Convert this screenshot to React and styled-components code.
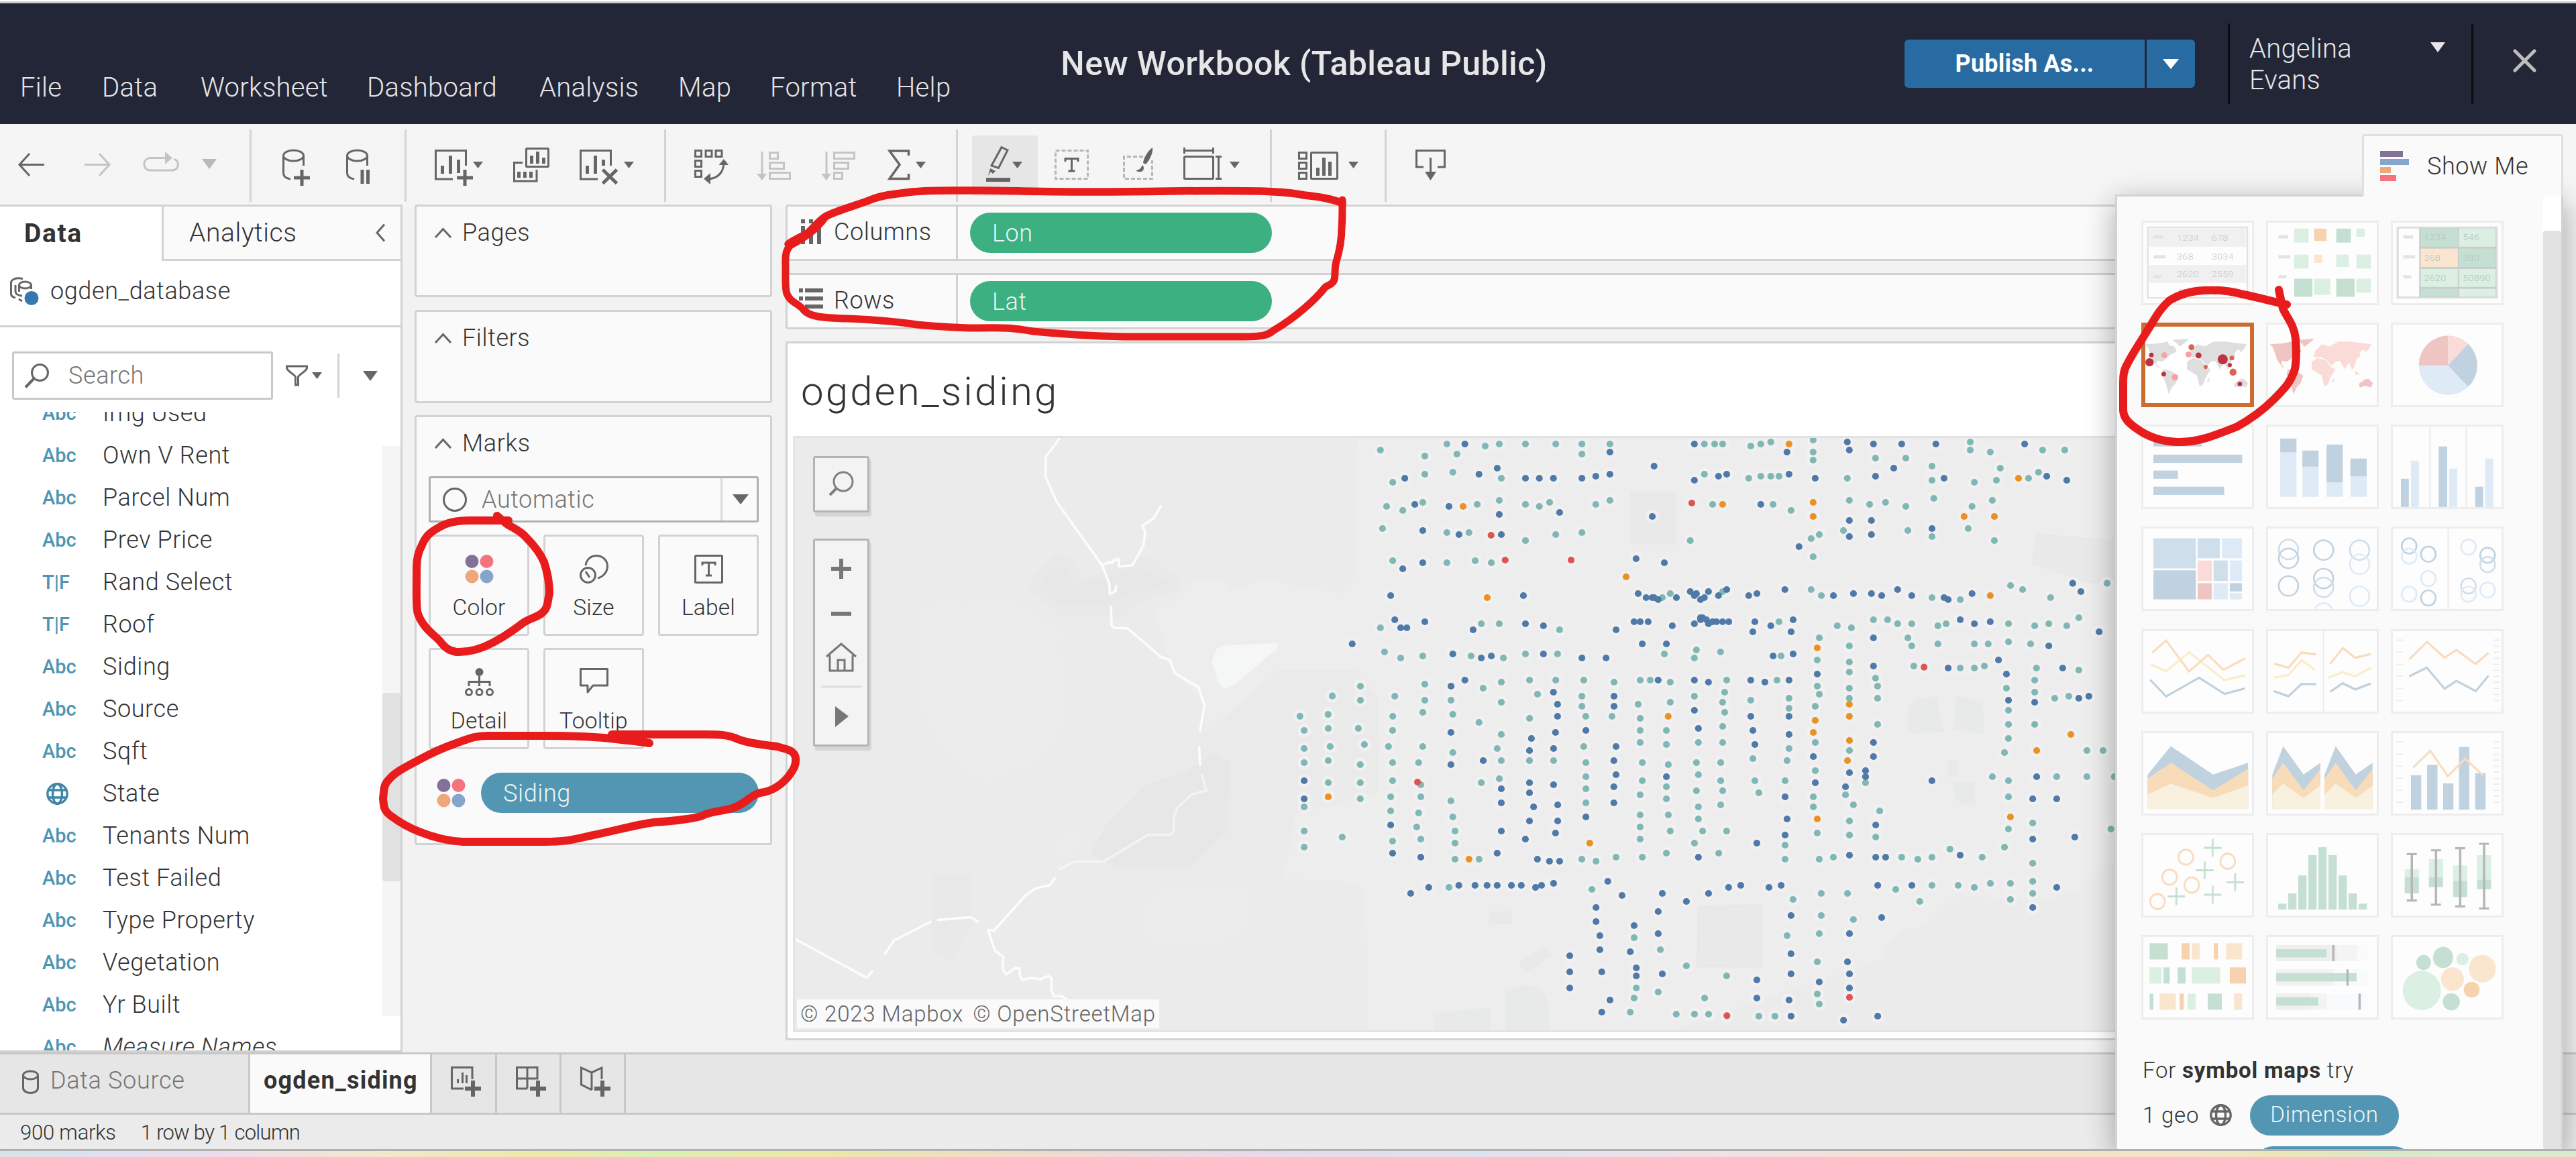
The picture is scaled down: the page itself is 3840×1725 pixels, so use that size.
import React from "react";
import styled, { createGlobalStyle, css } from "styled-components";

const GlobalStyle = createGlobalStyle`
  *, *::before, *::after { box-sizing: border-box; }
  body { margin: 0; background: #f2f2f2; }
  svg { display: block; flex: none; }
`;

const ink = "#666666";
const line = "#d2d2d2";
const faint = "#c4c4c4";

/* ---------- shell ---------- */
const Shell = styled.div`
  position: relative;
  display: flex;
  flex-direction: column;
  width: 3840px;
  height: 1725px;
  overflow: hidden;
  background: #f2f2f2;
  color: #333;
  font-family: Roboto, "Liberation Sans", sans-serif;
  font-size: 36px;
  font-weight: 350;
  letter-spacing: 0.6px;
  white-space: nowrap;
`;
const WindowEdge = styled.div`
  flex: none;
  height: 5px;
  border-top: 2px solid #fff;
  background: #cbcdce;
`;

/* ---------- header ---------- */
const Header = styled.header`
  display: flex;
  flex: none;
  height: 180px;
  background: #232637;
  color: #e6e6e6;
  font-size: 40px;
`;
const Menu = styled.nav`
  display: grid;
  grid-template-columns: 122px 147px 248px 257px 207px 137px 188px 147px;
  width: 1483px;
  padding: 101px 0 0 30px;
  line-height: 50px;
  letter-spacing: 0.3px;
`;
const DocTitle = styled.h1`
  width: 922px;
  margin: 60px 0 0;
  font-size: 50px;
  font-weight: 500;
  line-height: 60px;
  letter-spacing: 0.4px;
  text-align: center;
`;
const Publish = styled.div`
  display: flex;
  gap: 3px;
  width: 433px;
  height: 72px;
  margin: 54px 49px 0 auto;
`;
const PublishButton = styled.button`
  display: flex;
  align-items: center;
  justify-content: center;
  padding: 0;
  border: 0;
  background: #286ba2;
  color: #fff;
  font: 700 36px Roboto, sans-serif;
  letter-spacing: 0.2px;
  ${(p) => (p.$split ? css`width: 72px; border-radius: 0 6px 6px 0;` : css`flex: 1; border-radius: 6px 0 0 6px;`)}
`;
const HeaderRule = styled.div`
  width: 3px;
  height: 120px;
  margin-top: 30px;
  background: #0b0b10;
`;
const User = styled.div`
  display: flex;
  justify-content: space-between;
  width: 360px;
  padding: 44px 39px 0 29px;
  line-height: 47px;
  letter-spacing: 0.2px;
  svg { margin-top: 14px; }
`;
const Close = styled.div`
  width: 153px;
  padding: 68px 0 0 59px;
`;

/* ---------- toolbar ---------- */
const Toolbar = styled.div`
  display: flex;
  flex: none;
  align-items: center;
  height: 124px;
  margin-bottom: -4px;
  background: #f5f5f5;
`;
const Tool = styled.div`
  flex: none;
  width: ${(p) => p.$w}px;
  margin-left: ${(p) => p.$ml}px;
  ${(p) => p.$on && css`padding: 15px 0; background: #e6e6e6; border-radius: 3px;`}
`;
const ToolRule = styled.div`
  flex: none;
  width: 3px;
  height: 108px;
  margin-left: ${(p) => p.$ml}px;
  background: #d4d4d4;
`;

/* ---------- data pane ---------- */
const Main = styled.main`
  display: flex;
  flex: none;
  height: 1264px;
  padding-right: 40px;
`;
const DataPane = styled.aside`
  display: flex;
  flex-direction: column;
  flex: none;
  width: 600px;
  margin-right: 18px;
  border: 3px solid ${line};
  border-left: 0;
  background: #fff;
`;
const PaneTabs = styled.div`
  display: flex;
  flex: none;
  height: 81px;
  font-size: 39px;
  line-height: 81px;
`;
const PaneTab = styled.div`
  ${(p) => p.$active
    ? css`width: 241px; padding-left: 36px; font-weight: 700; letter-spacing: 1.6px;`
    : css`
      display: flex;
      flex: 1;
      align-items: center;
      justify-content: space-between;
      padding: 0 23px 0 38px;
      border: solid ${line};
      border-width: 0 0 3px 3px;
      background: #fafafa;
      line-height: 78px;
    `}
`;
const Source = styled.div`
  display: flex;
  flex: none;
  gap: 17px;
  align-items: center;
  height: 99px;
  padding: 0 0 6px 15px;
  border-bottom: 3px solid ${line};
  letter-spacing: 0.6px;
`;
const SearchRow = styled.div`
  display: flex;
  flex: none;
  align-items: center;
  height: 126px;
  padding: 0 0 0 18px;
`;
const SearchBox = styled.div`
  display: flex;
  gap: 29px;
  align-items: center;
  width: 389px;
  height: 72px;
  margin: 18px 19px 0 0;
  padding-left: 15px;
  border: 3px solid #c8c8c8;
  border-radius: 3px;
  color: #757575;
`;
const SearchTools = styled.div`
  display: flex;
  align-items: center;
  height: 66px;
  margin-top: 18px;
`;
const SearchRule = styled.div`
  width: 3px;
  height: 66px;
  margin: 0 35px 0 23px;
  background: #d4d4d4;
`;
const FieldArea = styled.div`
  display: flex;
  flex: 1;
  overflow: hidden;
`;
const FieldList = styled.ul`
  flex: 1;
  margin: -30px 0 0;
  padding: 0;
  list-style: none;
`;
const Field = styled.li`
  display: flex;
  align-items: center;
  height: 63.07px;
  padding-left: 63px;
  font-style: ${(p) => (p.$italic ? "italic" : "normal")};
`;
const FieldType = styled.span`
  display: flex;
  flex: none;
  width: 90px;
  color: #4f95b3;
  font-size: 29px;
  font-style: normal;
  font-weight: 500;
  letter-spacing: 0;
`;
const Scroll = styled.div`
  flex: none;
  width: 27px;
  height: ${(p) => p.$h};
  margin-top: ${(p) => p.$mt}px;
  padding-top: ${(p) => p.$start}px;
  background: ${(p) => p.$track};
`;
const Thumb = styled.div`
  height: ${(p) => p.$h};
  border-radius: 4px;
  background: #e1e1e1;
`;

/* ---------- cards ---------- */
const Cards = styled.section`
  display: flex;
  flex-direction: column;
  flex: none;
  gap: 18.5px;
  width: 533px;
  margin-right: 20px;
`;
const Card = styled.div`
  flex: none;
  height: ${(p) => p.$h}px;
  border: 3px solid ${line};
  border-radius: 4px;
  background: #fafafa;
`;
const CardHead = styled.div`
  display: flex;
  gap: 15px;
  align-items: center;
  height: 36px;
  margin: 21px 0 0 26px;
  line-height: 36px;
`;
const MarkType = styled.div`
  display: flex;
  align-items: center;
  height: 69px;
  margin: 31px 17px 18px 18px;
  padding-left: 18px;
  border: 3px solid #b0b0b0;
  border-radius: 3px;
  color: #757575;
  line-height: 69px;
  span { flex: 1; margin-left: 22px; padding-top: 2px; }
`;
const MarkTypeArrow = styled.div`
  display: flex;
  align-items: center;
  height: 63px;
  padding: 0 12px 0 15px;
  border-left: 3px solid #dcdcdc;
`;
const MarkGrid = styled.div`
  display: grid;
  grid-template: repeat(2, 151px) / repeat(3, 150px);
  gap: 18px 21px;
  margin-left: 18px;
`;
const MarkButton = styled.div`
  display: flex;
  flex-direction: column;
  align-items: center;
  padding-top: 27px;
  border: 3px solid ${line};
  border-radius: 4px;
  font-size: 33.5px;
  line-height: 40px;
  letter-spacing: 0.2px;
  svg { margin-bottom: 16px; }
`;
const MarkPill = styled.div`
  display: flex;
  gap: 23px;
  align-items: center;
  margin: 35px 17px 0 30px;
`;
const Pill = styled.div`
  width: ${(p) => p.$w}px;
  height: 60px;
  padding: 4px 0 0 33px;
  border-radius: 30px;
  background: ${(p) => p.$bg};
  color: #ecf6f3;
  line-height: 55px;
`;

/* ---------- shelves and view ---------- */
const Stage = styled.section`
  display: flex;
  flex: 1;
  flex-direction: column;
  gap: 18px;
`;
const Shelf = styled.div`
  display: flex;
  flex: none;
  align-items: center;
  height: 84px;
  border: 3px solid ${line};
  border-radius: 4px;
  background: #fafafa;
`;
const ShelfLabel = styled.div`
  display: flex;
  gap: 16px;
  align-items: center;
  width: 254px;
  height: 78px;
  margin-right: 18px;
  padding: 0 0 2px 17px;
  border-right: 3px solid ${line};
`;
const View = styled.div`
  height: 1042px;
  border: 3px solid ${line};
  background: #fff;
`;
const ViewTitle = styled.h2`
  height: 138px;
  margin: 0;
  padding: 7px 0 0 20px;
  font-size: 60px;
  font-weight: 300;
  line-height: 129px;
  letter-spacing: 3.1px;
`;
const MapFrame = styled.div`
  position: relative;
  height: 889px;
  margin: 0 8px;
  border: 3px solid #e3e3e3;
  background: #ebebeb;
  overflow: hidden;
`;
const MapControl = styled.div`
  position: absolute;
  top: ${(p) => p.$top}px;
  left: 27px;
  width: 84px;
  height: ${(p) => p.$h}px;
  border: 3px solid #b4b4b4;
  border-radius: 3px;
  background: #f3f3f3;
  box-shadow: 3px 6px 0 #d5d5d5;
`;
const Credit = styled.div`
  position: absolute;
  bottom: 3px;
  left: 3px;
  height: 43px;
  padding: 0 5px;
  background: #fafafa;
  color: ${ink};
  font-size: 33px;
  line-height: 44px;
  letter-spacing: 0.8px;
  span + span { margin-left: 14px; }
`;

/* ---------- footer ---------- */
const SheetTabs = styled.footer`
  display: flex;
  flex: none;
  height: 93px;
  border: solid #c8c8c8;
  border-width: 3px 0;
  background: #e6e6e6;
`;
const SheetTab = styled.div`
  display: flex;
  align-items: center;
  width: ${(p) => p.$w}px;
  padding: 0 0 9px ${(p) => p.$pad}px;
  border-right: 3px solid #c8c8c8;
  color: ${(p) => (p.$active ? "#333" : "#757575")};
  background: ${(p) => (p.$active ? "#fafafa" : "transparent")};
  font-weight: ${(p) => (p.$active ? 700 : "inherit")};
  letter-spacing: ${(p) => (p.$active ? 1.2 : 0.7)}px;
  svg { margin: 3px 17px 0 0; }
`;
const Status = styled.div`
  display: flex;
  flex: none;
  gap: 37px;
  height: 51px;
  padding-left: 30px;
  background: #ebebeb;
  font-size: 31px;
  line-height: 54px;
  letter-spacing: -0.2px;
  span:last-child { letter-spacing: -0.7px; }
`;
const Wallpaper = styled.div`
  position: relative;
  z-index: 3;
  flex: none;
  height: 12px;
  border-top: 3px solid #b2b0ae;
  background: linear-gradient(90deg, #dbe2e6 0, #dfe0ee 130px, #ecdcec 320px, #f3e6cf 560px, #f0e8a8 800px, #dcefb4 960px, #ece8a6 1200px, #f0dcc8 1500px, #ead8e8 1850px, #dfe2ee 2200px, #f3e0e4 2600px, #f5e0c8 3000px, #f5e4cc 3260px, #ebe6b6 3410px, #dbe8c8 3550px, #dde9cf 3840px);
`;

/* ---------- show me ---------- */
const ShowMe = styled.div`
  position: absolute;
  z-index: 2;
  top: 200px;
  left: 3153px;
  display: flex;
  flex-direction: column;
  align-items: flex-end;
  width: 668px;
  height: 1513px;
`;
const ShowMeTab = styled.div`
  z-index: 1;
  display: flex;
  flex: none;
  gap: 27px;
  align-items: center;
  width: 300px;
  height: 93px;
  margin-bottom: -3px;
  padding: 0 0 0 24px;
  border: 3px solid #dfdfdf;
  border-bottom: 0;
  border-radius: 4px 4px 0 0;
  background: #fafafa;
`;
const Panel = styled.div`
  display: flex;
  flex: none;
  width: 668px;
  height: 1423px;
  border: 3px solid ${line};
  border-bottom: 0;
  background: #fafafa;
  box-shadow: 0 12px 42px rgba(0, 0, 0, 0.32);
  overflow: hidden;
`;
const PanelBody = styled.div`
  flex: 1;
  padding: 36px 0 0 36px;
`;
const Gallery = styled.div`
  display: grid;
  grid-template-columns: repeat(3, 168px);
  grid-auto-rows: 126px;
  gap: 26.15px 18px;
`;
const Tile = styled.div`
  border: ${(p) => (p.$picked ? "6px solid #cc6c2f" : "3px solid #ededed")};
  background: ${(p) => (p.$picked ? "#fff" : "#fdfdfd")};
  svg { width: 100%; height: 100%; }
`;
const Hint = styled.div`
  display: flex;
  align-items: center;
  margin: ${(p) => p.$mt}px 0 0 2px;
  padding-left: ${(p) => p.$pl || 0}px;
  font-size: 33px;
  line-height: 50px;
  letter-spacing: 0.8px;
  white-space: pre;
`;
const HintPill = styled.div`
  width: ${(p) => p.$w}px;
  height: 60px;
  border-radius: 30px;
  background: #5296b4;
  color: #f0f6f8;
  line-height: 58px;
  text-align: center;
`;

const Annotations = styled.svg`
  position: absolute;
  z-index: 4;
  top: 0;
  left: 0;
  pointer-events: none;
`;

/* ---------- icons ---------- */
const Ico = ({ w, h = 60, c = ink, sw = 3, children }) => (
  <svg width={w} height={h} viewBox={`0 0 ${w} ${h}`} fill="none" stroke={c} strokeWidth={sw}>{children}</svg>
);
const Fill = ({ d, c = ink }) => <path d={d} fill={c} stroke="none" />;
const Drop = ({ w = 22, h = 15, c = ink }) => (
  <svg width={w} height={h} viewBox="0 0 22 15" preserveAspectRatio="none"><path d="M0 0H22L11 15Z" fill={c} /></svg>
);
const Caret = ({ x }) => <Fill d={`M${x} 24h15l-7.5 10z`} />;
const Plus = ({ x, y, r = 12, w = 6 }) => <path d={`M${x - r} ${y}h${2 * r}M${x} ${y - r}v${2 * r}`} strokeWidth={w} />;
const Cylinder = () => (
  <g>
    <ellipse cx="16.5" cy="15" rx="15" ry="8" />
    <path d="M1.5 15V41C1.5 46 6 49 12 50M31.5 15V30" />
  </g>
);
const FourDots = () => (
  <svg width="43" height="43" viewBox="0 0 43 43">
    <circle cx="10.5" cy="10" r="10" fill="#84719a" /><circle cx="32.5" cy="10" r="10" fill="#f3747f" />
    <circle cx="10.5" cy="32.5" r="10" fill="#eea67a" /><circle cx="32.5" cy="32.5" r="10" fill="#86a5cb" />
  </svg>
);
const Globe = ({ c, s = 33, sw = 3.4 }) => (
  <svg width={s} height={s} viewBox="0 0 33 33" fill="none" stroke={c} strokeWidth={sw}>
    <circle cx="16.5" cy="16.5" r="14.7" /><ellipse cx="16.5" cy="16.5" rx="7" ry="14.7" />
    <path d="M3.5 11H29.5M3.5 22H29.5" />
  </svg>
);
const Chevron = () => <Ico w={27} h={16}><path d="M2 15L13.5 2.5L25 15" /></Ico>;

const tools = [
  [27, 40, <path d="M39 28.5H2M17 12L2 28.5L17 45" />],
  [59, 40, <path d="M0 28.5H37M22 12L37 28.5L22 45" stroke={faint} />],
  [47, 55, <g stroke={faint}><path d="M46 20.5C50 21 52.5 24 52.5 28C52.5 34 48 37 43 37H12C6 37 2 34 2 28C2 22 6 18.500 12 18.500H34" /><Fill c={faint} d="M33 9L44 18.500L33 28Z" /></g>],
  [33, 22, <Fill c="#b9b9b9" d="M0 20H22L11 35Z" />],
  [49],
  [46, 41, <g><Cylinder /><Plus x={29} y={48} w={5} /></g>],
  [54, 38, <g><Cylinder /><Fill d="M21.500 36h5v21h-5zM30 36h5v21h-5z" /></g>],
  [49],
  [42, 72, <g><path d="M27 50H1.500V7.500H46.500V30" /><Fill d="M9 30h5v12H9zM21 15h5v27h-5zM33 21h5v20h-5z" /><Plus x={45} y={48} w={5} /><Caret x={57} /></g>],
  [45, 54, <g><rect x="19.500" y="4.500" width="33" height="27" rx="1" /><Fill d="M25 15h5v12h-5zM34 9h5v18h-5zM43 18h5v9h-5z" /><path d="M14 25.500H1.500V53H35V36" /><Fill d="M6 39h5v9H6zM15 39h5v9h-5zM24 39h5v9h-5z" /></g>],
  [45, 81, <g><path d="M27 50H1.500V7.500H46.500V30" /><Fill d="M9 30h5v12H9zM21 15h5v27h-5zM33 21h5v9h-5z" /><path d="M34.500 36L55.500 56.500M55.500 36L34.500 56.500" strokeWidth="5" /><Caret x={66} /></g>],
  [45],
  [42, 54, <g><rect x="1.500" y="7.500" width="9" height="9" /><rect x="17" y="7.500" width="9" height="9" /><rect x="32" y="7.500" width="9" height="9" /><rect x="1.500" y="22.500" width="9" height="9" /><rect x="1.500" y="37.500" width="9" height="9" /><path d="M44 27C43 40 36 48 22 50" /><Fill d="M36.500 29L44 20L51 29ZM14 49.500L24 41V58Z" /></g>],
  [39, 51, <g stroke={faint}><path d="M8 9V43" /><Fill c={faint} d="M0 42H15L8 52Z" /><rect x="19.500" y="10.500" width="12" height="9" /><rect x="19.500" y="25.500" width="21" height="9" /><rect x="19.500" y="40.500" width="30" height="9" /></g>],
  [45, 51, <g stroke={faint}><path d="M8 9V43" /><Fill c={faint} d="M0 42H15L8 52Z" /><rect x="19.500" y="10.500" width="30" height="9" /><rect x="19.500" y="25.500" width="21" height="9" /><rect x="19.500" y="40.500" width="12" height="9" /></g>],
  [48, 57, <g><path d="M31.500 15V8H3L18 28.500L3 49.500H31.500V42" strokeWidth="3.500" /><Caret x={42} /></g>],
  [45],
  [21, 98, <g><path d="M44 2.500L53 7L39.500 33.500L29 30Z" /><Fill d="M27 34L35 38L31 42L28 39L24 45Z" /><Fill d="M21 48h36v6H21z" /><Caret x={60} /></g>, true],
  [25, 51, <g><rect x="1.500" y="7.500" width="48" height="42" stroke="#b6b6b6" strokeDasharray="6 3" /><path d="M16 24V19.500H35V24M25.500 20V38M20.500 38H30.500" /></g>],
  [51, 48, <g><path d="M30 16.500H1.500V49.500H43.500V22" stroke="#b6b6b6" strokeDasharray="6 3" /><Fill d="M44 3C37 8 31 18 30 26L34 28C41 20 45 10 44 3ZM29 29C27 33 26 36 19 37C25 42 34 38 30 30Z" /></g>],
  [42, 86, <g><rect x="1.500" y="16.500" width="43" height="33" rx="1" /><path d="M1.500 3V12M44.500 3V12M1.500 7.500H44.500M48 16.500H57M48 49.500H57M52.500 16.500V49.500" /><Caret x={69} /></g>],
  [43],
  [39, 90, <g><rect x="1.500" y="10.500" width="11" height="9" /><rect x="1.500" y="25.500" width="11" height="9" /><rect x="1.500" y="40.500" width="11" height="9" /><rect x="19.500" y="10.500" width="39" height="39" rx="1" /><Fill d="M27 33h5v12h-5zM36 18h5v27h-5zM45 24h5v21h-5z" /><Caret x={75} /></g>],
  [39],
  [43, 45, <g><path d="M12 32H1.500V7.500H43.500V32H33M22.500 18V40" /><Fill d="M14 39H31L22.500 52Z" /></g>],
];

const fields = [
  ["Abc", "Img Used"], ["Abc", "Own V Rent"], ["Abc", "Parcel Num"], ["Abc", "Prev Price"], ["T|F", "Rand Select"],
  ["T|F", "Roof"], ["Abc", "Siding"], ["Abc", "Source"], ["Abc", "Sqft"], ["geo", "State"], ["Abc", "Tenants Num"],
  ["Abc", "Test Failed"], ["Abc", "Type Property"], ["Abc", "Vegetation"], ["Abc", "Yr Built"], ["Abc", "Measure Names"],
];

/* ---------- map data ---------- */
const palette = { t: "#80b7b4", b: "#4f79a8", o: "#ed9022", r: "#dd5553" };

/* Each sector has its own origin and units per pixel; marks are "x,y" pairs. */
const sectors = [
  {
    x: 1160, y: 480, sx: 1.742, sy: 1.4255,
    t: "1439,795 1355,838 1428,834",
  },
  {
    x: 2000, y: 640, sx: 2.6133, sy: 3,
    t: "151,93 410,66 559,75 614,66 716,66 834,66 936,66 1045,66 1413,66 1453,66 1484,66 324,120 449,111 936,111 324,201 433,192 199,237 622,219 1413,201 175,345 238,363 316,327 528,336 614,318 716,336 770,345 810,327 990,336 1045,318 1445,336 159,444 410,462 496,462 716,498 834,471 936,462 1358,498 199,588 410,597 520,588 583,597 1249,753 1280,735 1484,726 151,888 544,870 614,870 849,897 167,996 230,1023 316,1014 504,1014 630,1023 716,1005 841,1005 1257,1005 1382,987 1374,1023 1476,996 73,1149 73,1212 324,1140 207,1194 324,1212 426,1212 316,1266 199,1284 433,1275 551,1158 622,1131 622,1221 535,1311 732,1122 834,1122 763,1185 732,1293 943,1122 936,1194 936,1239 951,1284 1061,1131 1053,1284 1163,1122 1202,1122 1280,1131 1155,1230 1280,1221 1163,1293 1374,1194 1500,1122 1492,1176 1484,1221 1492,1266",
    b: "480,66 1374,66 1045,102 1217,165 606,174 246,219 535,201 716,219 770,219 825,219 936,219 990,210 1045,201 1374,228 1468,210 1500,201 285,336 418,345 614,381 849,372 1210,390 316,453 457,471 622,471 316,597 238,624 1147,579 1257,597 191,744 708,744 1155,735 1186,753 1210,753 1217,753 1233,762 1304,753 1358,726 1374,744 1382,735 1398,762 1413,753 1429,726 1468,744 1500,717 207,852 230,888 254,888 324,861 512,897 716,870 786,879 1069,897 1139,861 1163,861 1194,861 1288,879 1374,870 1398,843 1398,852 1406,843 1421,852 1429,870 1445,861 1460,861 1484,861 1508,861 41,960 1171,960 1265,960 433,1005 544,1023 583,1014 786,1005 936,1023 1030,1023 480,1122 426,1149 825,1176 841,1230 841,1284 1061,1194 1061,1239 1233,1122 1374,1122 1429,1131 1374,1257",
    o: "473,345 1484,336 1108,660 567,753 1272,1284",
    r: "1364,330 582,474 637,585 894,585",
  },
  {
    x: 2580, y: 640, sx: 2.6133, sy: 3,
    t: "78,75 117,66 156,57 321,48 321,102 321,138 564,129 682,129 933,57 933,93 1011,102 1215,93 1301,93 784,165 1050,174 70,219 117,210 156,210 188,210 454,219 784,228 949,237 1035,228 1160,219 1199,192 165,336 235,363 462,318 541,336 603,327 682,345 791,309 940,345 1019,318 345,471 313,489 439,453 690,453 784,480 925,444 1027,498 321,570 313,717 353,744 784,753 894,762 1090,699 1137,717 1246,753 1466,689 188,861 415,879 470,888 556,852 611,852 650,870 705,870 807,879 839,870 1082,870 1184,879 1239,870 1309,879 1356,843 345,933 462,969 690,933 705,969 807,960 949,960 1003,960 1082,951 1168,960 196,1014 337,1032 462,1041 462,1086 713,1059 894,1068 949,1068 988,1059 1191,1068 1356,1077 180,1122 337,1149 345,1185 462,1158 462,1203 564,1113 572,1149 572,1203 1074,1158 1184,1122 1184,1176 1262,1203 1317,1194 78,1212 227,1203 227,1248 329,1239 1082,1257 572,1320 1082,1320 1184,1320",
    b: "219,102 454,57 462,93 556,66 666,66 799,66 1145,66 635,174 227,201 329,219 564,210 831,219 1231,210 1309,228 117,336 462,408 548,408 462,480 548,471 784,444 266,525 70,744 102,735 211,717 400,744 478,735 548,735 588,744 650,717 705,744 831,753 847,762 940,735 1332,689 1364,726 94,861 156,879 243,852 86,906 235,906 894,852 949,870 1011,861 556,933 1239,969 1435,906 165,1014 243,1005 337,1095 556,1059 847,1068 1043,1032 1074,1095 1293,1068 78,1122 133,1131 227,1122 1082,1212 1184,1221 1356,1203 1395,1194 78,1284 227,1284",
    o: "227,66 1121,219 321,327 321,390 909,390 1027,390 1011,744 337,978 462,1230 462,1284 329,1302",
    r: "753,1064",
  },
  {
    x: 1900, y: 1080, sx: 2.45, sy: 3,
    t: "108,27 196,18 306,18 431,27 108,108 203,99 328,90 416,99 541,99 651,126 828,45 813,108 828,162 108,171 196,162 313,180 431,171 526,171 196,261 313,261 431,252 534,270 755,261 821,243 931,162 1019,162 1129,99 1137,171 1335,27 1431,27 1335,81 1431,90 1343,171 1438,180 1137,234 1137,288 1137,351 1343,252 1431,279 1335,315 1431,333 313,333 424,324 424,387 534,324 526,396 519,459 534,513 644,342 651,414 659,477 659,531 659,603 747,603 108,369 108,477 108,549 247,504 431,522 1335,405 1438,405 1335,459 1445,477 1335,513 1343,594 1431,576 1122,603 1174,612 1247,594 637,729 1159,738 1313,954 1409,1008 1504,1080 1321,1179 1313,1224 1401,1197 1299,1287 1467,1296",
    b: "644,36 1026,36 1137,27 938,63 931,117 1019,108 1247,99 762,162 644,180 1239,162 1247,225 1239,279 1431,234 108,252 108,333 931,261 1019,270 828,288 931,306 828,351 946,369 1034,360 931,432 1034,432 828,477 1026,486 916,513 1239,351 1137,414 424,450 431,576 534,594 813,576 960,603 1004,612 1041,612 497,756 563,729 673,720 732,720 776,720 813,720 865,720 901,720 953,729 975,720 1019,711 1217,702 1269,765 1416,756 1504,792 1174,819 1174,882 1401,837 1313,900 1188,945 1401,936 1188,1008 1299,1017 1078,1035 1078,1107 1195,1107 1321,1089 1321,1125 1416,1116 1078,1179 1225,1233 1195,1287",
    o: "196,324 1151,531 710,603",
    r: "522,258",
  },
  {
    x: 2520, y: 1080, sx: 2.3758, sy: 3,
    t: "114,9 28,81 114,81 442,81 349,108 21,171 107,171 221,153 342,162 563,117 1126,63 1112,126 1404,117 1461,117 28,225 107,252 228,252 335,252 442,207 1069,234 1126,252 1297,234 1404,234 1501,234 21,297 114,297 242,306 620,261 549,315 435,324 1126,324 28,369 107,360 435,369 577,360 670,387 28,423 563,432 1212,441 43,477 128,477 449,486 563,495 656,504 1126,468 1489,468 14,531 335,540 919,558 1112,549 100,576 335,603 456,603 506,594 748,594 805,603 855,594 1033,594 1212,621 855,720 948,720 1062,711 1133,711 1005,729 1212,702 1212,756 727,738 463,756 556,756 363,783 812,792 1133,783 463,855 577,873 342,945 456,936 449,1062 128,1125 449,1206 456,1251 50,1224 14,1296 64,1296 242,1305 299,1305",
    b: "28,18 221,27 349,45 228,90 648,81 435,144 648,144 563,216 620,207 620,234 1226,234 442,261 549,279 855,252 335,324 1212,333 1297,333 342,423 656,450 335,495 1212,513 1361,504 235,531 563,585 656,594 691,594 955,585 28,594 64,756 135,729 178,720 278,729 321,720 663,720 784,720 1297,729 1212,819 356,855 677,864 563,936 356,1026 356,1116 556,1062 563,1116 563,1179 235,1143 235,1224 456,1152 349,1233 356,1305 542,1323 663,1305",
    o: "435,36 563,72 556,162 1347,45 1226,117 1133,414 449,423",
    r: "563,1221 129,1303",
  },
];
const marks = sectors.flatMap((s) =>
  Object.keys(palette).flatMap((k) =>
    (s[k] || "").split(" ").filter(Boolean).map((pair) => {
      const [x, y] = pair.split(",").map(Number);
      return { x: s.x + x / s.sx, y: s.y + y / s.sy, fill: palette[k] };
    })
  )
);

const roads = [
  "731,247 695,287 694,328 723,382 841,517 860,557 861,578 876,572 878,559",
  "841,517 861,510 867,513 871,506 884,504 885,520 920,517 949,474 953,447 946,433 974,418 995,390",
  "864,603 866,645 872,650 907,651 993,711 1017,719 1031,747 1091,776 1107,815 1095,872",
  "1093,901 1096,944", "1100,961 1112,996 1074,1004 1036,1033 1028,1050 1027,1082 1020,1090 960,1090 845,1147 770,1147 730,1163",
  "720,1180 705,1197 668,1204 641,1220 560,1294 545,1292 562,1335 585,1350 583,1374 591,1387 614,1374 627,1373 628,1390 635,1399 654,1394 680,1397 702,1390 710,1395 709,1418 716,1433 737,1433 752,1441",
  "521,1276 501,1265 413,1271", "398,1274 300,1315 276,1345", "246,1378 230,1394 45,1312",
];
const land = [
  ["#ededed", "1505,247 2000,247 3500,247 3500,1180 2300,1510 1530,1510 1528,1205 1480,1190 1315,1183 1345,1045 1175,900 1115,870 1107,815 1031,747 1017,719 980,620 1085,547 1150,547 1180,572 1260,547 1460,577 1497,547"],
  ["#ececec", "380,615 435,582 475,603 580,590 650,610 680,640 730,652 725,705 742,730 740,850 720,885 665,940 620,945 550,973 495,962 430,900 370,805"],
  ["#e9e9e9", "655,545 720,492 770,505 790,552 870,515 960,497 1045,545 1045,570 960,588 890,628 740,628 655,572"],
  ["#e7e7e7", "683,555 712,522 750,522 770,555 870,540 935,522 1012,555 960,572 900,578 860,600 730,600 683,570"],
  ["#eaeaea", "1115,870 1300,740 1500,740 1560,800 1560,1000 1345,1045 1295,1150 1000,1190 793,1173 845,1147"],
  ["#e7e7e7", "1130,915 1175,935 1165,1085 1065,1160 875,1160 810,1130 850,1070 950,985 1060,955"],
  ["#e9e9e9", "402,1176 502,1176 502,1285 452,1357 398,1340"],
  ["#ececec", "948,1240 1000,1206 1223,1200 1223,1290 1165,1297 1140,1319 975,1319 948,1300"],
  ["#ececec", "720,1130 745,1090 782,1088 770,1118 725,1138"],
  ["#f5f7f6", "1126,722 1138,695 1165,687 1296,683 1296,694 1184,772 1160,780 1142,766"],
];
const px = (list, f) => list.split(" ").map((q) => f(...q.split(",").map(Number))).join(" ");
const west = (s) => px(s, (x, y) => `${(1160 + x / 1.742).toFixed(1)},${(480 + y / 1.4255).toFixed(1)}`);

function MapCanvas() {
  return (
    <svg width="2600" height="883" viewBox="1185 653 2600 883">
      {land.map(([c, s], i) => <polygon key={i} points={west(s)} fill={c} />)}
      <g fill="#e9e9e9" stroke="#e6e6e6">
        <path d="M2431 735H2498V811H2431Z" />
        <path d="M2532 1351L2627 1349L2626 1442L2530 1441Z" />
        <path d="M3036 796L3150 806V870L3110 868L3030 840Z" />
      </g>
      <g fill="#e7eae9">
        <path d="M2219 1359L2254 1358V1378H2219ZM2264 1434L2304 1410L2314 1425L2274 1450ZM2138 1511L2220 1502L2223 1505L2221 1536H2138ZM2244 1476L2277 1468L2299 1476L2309 1496V1536H2244Z" />
        <path d="M2844 1055L2856 1043L2886 1038L2898 1091L2844 1094ZM2916 1036L2956 1050L2958 1096L2913 1087ZM2910 1166H2943L2945 1200L2923 1198L2914 1188ZM2904 1135H2919V1158H2904ZM2453 775H2477V787H2453ZM2436 793H2451V808H2436Z" />
      </g>
      <path d="M2806 1536V1475L2806 1415L2838 1383H2862L2920 1335L3045 1345L3093 1330L3130 1290H3200V1536Z" fill="#ebebeb" />
      <g fill="none" stroke="#fcfcfc" strokeWidth="3.600" strokeLinejoin="round">
        {roads.map((r, i) => <polyline key={i} points={west(r)} opacity={i === 4 ? 0.6 : 1} />)}
      </g>
      <g fill="#f0f0f0">{marks.map((m, i) => <circle key={i} cx={m.x} cy={m.y} r="10.200" />)}</g>
      {marks.map((m, i) => <circle key={i} cx={m.x} cy={m.y} r="5.100" fill={m.fill} />)}
    </svg>
  );
}

/* ---------- gallery drawings ---------- */
const g1 = "#c5e0d3", g2 = "#dcefe3", o1 = "#f6d2ae", o2 = "#fae5cf", b1 = "#c0d2df", b2 = "#cfdeeb", b3 = "#deeaf6", p1 = "#eec5c2", p2 = "#fadbd8";
const R = ({ list }) => list.map(([x, y, w, h, c], i) => <rect key={i} x={x} y={y} width={w} height={h} fill={c} />);
const E = ({ list, rx, ry, sw }) => list.map(([x, y, c], i) => <ellipse key={i} cx={x} cy={y} rx={rx} ry={ry} fill="none" stroke={c} strokeWidth={sw} />);
const L = ({ list }) => list.map(([c, pts], i) => <polyline key={i} points={pts} fill="none" stroke={c} strokeWidth="6.500" />);
const Ticks = () => (
  <path stroke="#ebebeb" strokeWidth="3.500" d={[32, 67, 102, 137, 172, 207].map((y) => `M20 ${y}h21`).join("") + [32, 49, 67, 84, 102, 119, 137, 154, 172, 189, 207].map((y) => `M348 ${y}h20`).join("")} />
);
const World = ({ a, b }) => (
  <g transform="translate(-95 -469)">
    <path fill={b} d="M108 548L150 545L185 538L190 552L207 556L215 575L192 588L175 605L165 612L150 608L146 620L158 636L175 645L150 632L132 605L125 580L118 560ZM200 532L258 528L240 545L225 557L216 545ZM168 640L195 645L221 663L212 690L197 708L188 731L178 690L165 660ZM410 692L430 676L442 674L457 690L450 706L432 700L412 706Z" />
    <path fill={a} d="M250 612L270 598L298 606L315 630L330 640L314 668L304 695L293 702L283 662L250 640ZM256 594L262 572L285 548L310 556L340 538L380 538L452 548L445 562L433 578L425 566L412 578L414 592L402 602L395 625L388 642L375 615L362 640L345 608L330 612L318 627L300 605L280 595ZM395 645L412 655L400 662ZM318 680L328 670L322 690Z" />
  </g>
);
const gray = "#c9c9c9";
const area = (xs, ys) => `${xs.map((x, i) => `${x},${ys[i]}`).join(" ")} ${xs[3]},228 ${xs[0]},228`;
const Areas = ({ xs }) => (
  <g>
    <polygon fill={b1} points={area(xs, [127, 44, 126, 92])} />
    <polygon fill="#f8dcba" points={area(xs, [138, 92, 172, 110])} />
    <polygon fill="#f9f1e0" points={area(xs, [184, 153, 194, 158])} />
  </g>
);
const stubs = [[42, 53, 33, 12, "#e3e3e3"], [42, 126, 40, 12, "#e3e3e3"], [42, 199, 27, 12, "#e3e3e3"]];

const gallery = [
  <g><rect x="22" y="24" width="338" height="258" fill="#fdfdfd" stroke="#e0e0e0" strokeWidth="5" /><R list={[[26, 28, 330, 67, "#f0f0f0"], [26, 162, 330, 65, "#f0f0f0"], ...stubs]} />
    <g fill={gray} fontSize="33" fontFamily="Roboto"><text x="120" y="74">1234</text><text x="238" y="74">678</text><text x="120" y="141">368</text><text x="238" y="141">3034</text><text x="120" y="207">2620</text><text x="238" y="207">2559</text><text x="120" y="272">4710</text><text x="238" y="272">1131</text></g></g>,
  <R list={[...stubs, [95, 29, 49, 51, g2], [163, 29, 42, 45, o1], [238, 29, 49, 51, g1], [306, 29, 28, 30, g2], [95, 124, 49, 51, g2], [163, 124, 28, 30, o2], [238, 124, 42, 45, g2], [306, 124, 49, 51, g2], [95, 212, 62, 66, g1], [163, 212, 55, 59, g2], [238, 212, 62, 66, g1], [306, 212, 49, 51, g2]]} />,
  <g><rect x="22" y="24" width="338" height="258" fill="#c9cccb" stroke="#dedede" strokeWidth="5" /><R list={[[26, 28, 70, 250, "#fdfdfd"], [101, 28, 126, 67, g1], [231, 28, 124, 67, g2], [101, 102, 126, 67, o2], [231, 102, 124, 67, g1], [101, 176, 126, 66, g2], [231, 176, 124, 66, g2], [101, 249, 126, 29, g1], [231, 249, 124, 29, g2], ...stubs]} />
    <g fill="#b4c6bd" fontSize="33" fontFamily="Roboto"><text x="112" y="70">1234</text><text x="244" y="70">546</text><text x="112" y="147">368</text><text x="244" y="147">380</text><text x="112" y="221">2620</text><text x="244" y="221">50890</text></g></g>,
  <g><World a="#dedede" b="#dedede" /><g transform="translate(-95 -469)">{[[123, 614, 14, 0], [129, 587, 8, 0], [173, 588, 10, 1], [265, 559, 10, 2], [255, 585, 10, 1], [289, 589, 10, 0], [313, 631, 7, 2], [371, 603, 17, 0], [402, 598, 8, 2], [395, 624, 7, 0], [406, 650, 12, 2], [171, 657, 8, 0], [209, 669, 11, 1], [429, 693, 8, 0]].map(([x, y, r, c], i) => <ellipse key={i} cx={x} cy={y} rx={r} ry={r * 1.08} fill={["#bd3340", "#fba09c", "#da6455"][c]} />)}</g></g>,
  <World a={p2} b={p1} />,
  <g transform="translate(194 156) scale(99 108)"><circle r="1" fill={b3} /><path d="M0 0H-1A1 1 0 0 1 0 -1Z" fill={p1} /><path d="M0 0V-1A1 1 0 0 1 0.69 -0.72Z" fill={p2} /><path d="M0 0L0.69 -0.72A1 1 0 0 1 0.69 0.72Z" fill={b1} /></g>,
  <R list={[[41, 50, 164, 30, b1], [41, 110, 301, 30, b1], [41, 168, 83, 30, b1], [41, 227, 240, 30, b1]]} />,
  <R list={[[48, 51, 55, 51, b1], [48, 102, 55, 162, b3], [123, 95, 55, 59, b1], [123, 154, 55, 110, b3], [205, 73, 55, 139, b1], [205, 212, 55, 52, b3], [286, 124, 55, 66, b1], [286, 190, 55, 74, b3]]} />,
  <R list={[[130, 0, 5, 301, "#ececec"], [253, 0, 5, 301, "#ececec"], [34, 198, 27, 103, b1], [68, 132, 27, 169, b3], [162, 80, 29, 221, b1], [198, 161, 27, 140, b3], [286, 227, 27, 74, b1], [320, 124, 27, 177, b3]]} />,
  <R list={[[41, 43, 144, 110, b2], [41, 160, 144, 106, b1], [191, 43, 75, 73, b2], [273, 43, 68, 73, b3], [191, 124, 48, 75, p2], [245, 124, 48, 75, b2], [300, 124, 41, 75, b3], [191, 207, 48, 59, p1], [245, 207, 48, 59, b3], [300, 207, 41, 30, b1], [300, 243, 41, 23, b3]]} />,
  <E rx={33} ry={36} sw={6} list={[[76, 84, b2], [76, 116, b1], [76, 217, b1], [195, 86, b1], [195, 190, b1], [195, 222, b2], [195, 316, b3], [317, 86, b2], [317, 138, b3], [317, 255, b3]]} />,
  <g><R list={[[192, 0, 5, 308, "#ececec"]]} /><E rx={25} ry={28} sw={6} list={[[62, 71, b1], [62, 108, b3], [127, 101, b1], [127, 190, b3], [62, 247, b3], [127, 261, b1], [263, 75, b3], [328, 105, b1], [328, 139, b2], [263, 217, b2], [263, 247, b3], [328, 232, b3]]} /></g>,
  <L list={[["#fbecca", "32,102 85,122 162,67 282,148 352,134"], ["#f9dcbd", "36,69 84,33 162,123 226,75 278,118 352,85"], [b1, "30,147 84,195 196,141 282,188 352,172"]]} />,
  <g><R list={[[192, 0, 5, 245, "#ececec"]]} /><L list={[["#f9dcbd", "26,100 76,112 120,68 170,73"], ["#fbecca", "26,141 76,133 120,90 166,118"], [b1, "26,180 76,195 120,159 170,160"], ["#f9dcbd", "217,101 260,55 302,83 355,72"], ["#fbecca", "211,141 260,125 302,137 355,112"], [b1, "217,182 260,157 302,175 355,158"]]} /></g>,
  <g><Ticks /><L list={[["#f9dcbd", "62,88 123,37 182,83 222,60 287,101 331,69"], [b1, "62,137 122,112 182,173 222,150 288,180 331,135"]]} /></g>,
  <Areas xs={[21, 100, 243, 362]} />,
  <g><Areas xs={[21, 58, 127, 184]} /><Areas xs={[198, 236, 304, 361]} /></g>,
  <g><Ticks /><R list={[[68, 128, 35, 100, b1], [123, 98, 35, 130, b1], [177, 152, 35, 76, b1], [231, 46, 35, 182, b1], [286, 122, 35, 106, b1]]} /><L list={[["#f9dcbd", "75,106 134,57 193,131 252,80 314,130"]]} /></g>,
  <g><E rx={25} ry={22} sw={6} list={[[151, 70, "#f9dcbd"], [293, 82, "#f9dcbd"], [96, 128, "#f9dcbd"], [171, 151, "#f9dcbd"], [55, 199, "#f9dcbd"]]} />
    <path stroke={g1} strokeWidth="6" d={[[242, 43], [215, 108], [318, 143], [242, 179], [119, 184]].map(([x, y]) => `M${x - 30} ${y}h60M${x} ${y - 26}v52`).join("")} /></g>,
  <R list={[205, 175, 123, 64, 41, 64, 123, 175, 205].map((y, i) => [41 + i * 34.1, y, 28, 222 - y, g1])} />,
  <g>{[[71, 61, 196, 105, 128, 175], [153, 50, 208, 76, 128, 157], [235, 44, 213, 94, 139, 186], [316, 31, 219, 64, 135, 163]].map(([x, t, b, l, d, e]) => <g key={x}><R list={[[x - 24, l, 48, d - l, g2], [x - 24, d, 48, e - d, g1]]} /><path d={`M${x} ${t}V${b}`} stroke="#b6b6b6" strokeWidth="8" /><path d={`M${x - 17} ${t}h34M${x - 17} ${b}h34`} stroke="#b6b6b6" strokeWidth="6" /></g>)}</g>,
  <R list={[[28, 24, 62, 47, g1], [137, 24, 27, 47, o1], [171, 24, 27, 47, o2], [246, 24, 14, 47, o1], [287, 24, 55, 47, o2], [28, 94, 41, 47, g2], [75, 94, 21, 47, g1], [123, 94, 27, 47, g1], [171, 94, 96, 47, g2], [300, 94, 55, 47, o1], [28, 170, 13, 47, g1], [62, 170, 55, 47, o2], [130, 170, 14, 47, o1], [157, 170, 27, 47, g2], [225, 170, 48, 47, g1], [314, 170, 28, 47, o2]]} />,
  <R list={[[34, 29, 314, 47, "#f8fafc"], [34, 29, 273, 47, "#f4f4f4"], [34, 29, 205, 47, "#efefef"], [34, 41, 171, 24, g1], [191, 29, 8, 47, "#b6b6b6"], [34, 100, 314, 47, "#f8fafc"], [34, 100, 198, 47, "#f2f2f2"], [34, 111, 273, 24, g1], [272, 100, 8, 47, "#b6b6b6"], [34, 170, 314, 47, "#f8fafc"], [34, 170, 171, 47, "#f3f3f3"], [34, 170, 116, 47, "#efefef"], [34, 181, 143, 24, g1], [313, 170, 8, 47, "#b6b6b6"]].map((r) => (r[0] === 191 ? [224, ...r.slice(1)] : r))} />,
  <g transform="translate(-941 -923)">{[[1046, 1084, 65, 57, g2], [1118, 988, 34, 31, g1], [1052, 1003, 25, 22, g1], [1184, 993, 21, 18, g2], [1251, 1021, 46, 40, o2], [1150, 1051, 39, 34, o2], [1215, 1082, 27, 23, o1], [1146, 1117, 29, 25, g1]].map(([x, y, a, b, c]) => <ellipse key={x} cx={x} cy={y} rx={a} ry={b} fill={c} />)}</g>,
];
const tileBox = (i) => (i === 3 ? "13.600 14.700 354.800 279.300" : i < 12 ? "6.800 7.350 368.400 294" : "6.800 5.800 368.400 233.700");

const strokes = [
  ["M2001 303C1985 296 1965 293 1944 291C1925 287 1910 286 1880 285C1796 283 1740 286 1633 286C1550 286 1500 284 1456 284C1410 284 1390 283 1360 286C1335 289 1315 291 1300 297C1275 307 1250 313 1232 322C1217 331 1210 345 1200 350C1188 356 1180 360 1175 364", 11.5],
  ["M1230 324C1215 345 1196 356 1178 366C1169 375 1171 390 1171 400C1171 415 1170 430 1173 438C1178 451 1190 452 1198 462C1206 471 1220 474 1264 475C1310 477 1340 480 1367 484C1400 487 1430 489 1456 489C1500 488 1510 489 1540 494C1590 499 1630 501 1677 502H1855C1880 502 1890 500 1898 493C1915 483 1930 472 1944 460C1958 448 1966 440 1974 430C1978 424 1986 426 1989 417C1991 408 1989 400 1992 390C1998 370 2000 355 2000 340C2001 330 2001 320 2001 298", 11],
  ["M758 776H700C685 776 668 778 655 786C640 794 634 800 628 815C621 828 621 840 621 860C621 885 620 907 623 915C630 935 645 945 655 955C663 965 668 970 680 972C700 973 720 966 735 958C750 950 765 940 778 930C788 922 798 922 808 914C818 906 816 895 819 885C819 865 815 850 811 838C804 822 795 812 785 802C775 790 763 787 754 780L741 769", 12],
  ["M968 1108C950 1105 935 1104 918 1102C880 1097 840 1097 811 1097H727C705 1097 695 1103 680 1108C660 1115 645 1122 628 1131C608 1142 590 1150 580 1162C570 1172 573 1180 571 1190C572 1205 573 1210 585 1218C600 1229 612 1235 625 1240C645 1248 665 1254 690 1255H811C840 1255 850 1253 880 1246C920 1238 945 1230 975 1226C1005 1224 1025 1222 1045 1217C1062 1208 1080 1210 1094 1204C1112 1198 1118 1186 1133 1182C1150 1180 1165 1170 1175 1158C1184 1146 1187 1140 1186 1130C1184 1118 1172 1117 1158 1113C1135 1110 1115 1108 1100 1102C1085 1095 1070 1095 1050 1095H912", 12],
  ["M3409 454C3385 449 3365 443 3344 439C3325 434 3310 432 3285 433C3265 434 3250 438 3234 448C3222 458 3215 470 3206 485C3194 505 3182 522 3172 541C3165 553 3165 560 3165 575V612C3166 625 3175 632 3185 639C3200 650 3220 658 3245 659C3275 660 3300 650 3335 636C3360 622 3375 610 3390 595C3405 580 3415 570 3421 550C3424 535 3423 520 3422 505C3420 485 3410 475 3403 460L3397 432", 12],
];

export default function App() {
  return (
    <Shell>
      <GlobalStyle />
      <WindowEdge />
      <Header>
        <Menu>{["File", "Data", "Worksheet", "Dashboard", "Analysis", "Map", "Format", "Help"].map((m) => <span key={m}>{m}</span>)}</Menu>
        <DocTitle>New Workbook (Tableau Public)</DocTitle>
        <Publish>
          <PublishButton>Publish As...</PublishButton>
          <PublishButton $split><Drop w={24} h={15} c="#fff" /></PublishButton>
        </Publish>
        <HeaderRule />
        <User><div>Angelina<br />Evans</div><Drop c="#e6e6e6" /></User>
        <HeaderRule />
        <Close><Ico w={35} h={35} c="#bdbdbf" sw={5}><path d="M3 3L32 32M32 3L3 32" strokeLinecap="round" /></Ico></Close>
      </Header>

      <Toolbar>
        {tools.map(([ml, w, art, on], i) => art
          ? <Tool key={i} $ml={ml} $w={w} $on={on}><Ico w={w}>{art}</Ico></Tool>
          : <ToolRule key={i} $ml={ml} />)}
      </Toolbar>

      <Main>
        <DataPane>
          <PaneTabs>
            <PaneTab $active>Data</PaneTab>
            <PaneTab>Analytics<Ico w={14} h={28}><path d="M13 1.500L2 14L13 26.500" /></Ico></PaneTab>
          </PaneTabs>
          <Source>
            <Ico w={43} h={43}>
              <path d="M19 3C15 1.500 10 1.500 6 3C3 4.500 1.500 6 1.500 8V25C1.500 28 4 30 8 31M8 12V21C8 25 10 27 18 28M13 33L18 36" />
              <ellipse cx="22.500" cy="12" rx="9" ry="5" /><path d="M13.500 12V22M31.500 12V18" />
              <circle cx="32" cy="31.500" r="10.500" fill="#3578b0" stroke="none" />
            </Ico>
            ogden_database
          </Source>
          <SearchRow>
            <SearchBox><Ico w={37} h={37}><circle cx="23.500" cy="13.500" r="12" /><path d="M15 22L2 35.500" strokeWidth="4" /></Ico>Search</SearchBox>
            <SearchTools>
              <Ico w={33} h={32}><path d="M1.500 2H31.500V5C30 10 20 14 18.500 18V30H14.500V18C13 14 3 10 1.500 5Z" /></Ico>
              <Tool $ml={6} $w={15}><Drop w={15} h={10} /></Tool>
              <SearchRule />
              <Drop />
            </SearchTools>
          </SearchRow>
          <FieldArea>
            <FieldList>
              {fields.map(([type, name]) => (
                <Field key={name} $italic={name === "Measure Names"}>
                  <FieldType>{type === "geo"
                    ? <Tool $ml={6} $w={33}><Globe c="#3e86a8" /></Tool>
                    : type}</FieldType>
                  {name}
                </Field>
              ))}
            </FieldList>
            <Scroll $h="850px" $mt={51} $start={368} $track="#f5f5f5"><Thumb $h="281px" /></Scroll>
          </FieldArea>
        </DataPane>

        <Cards>
          <Card $h={138}><CardHead><Chevron />Pages</CardHead></Card>
          <Card $h={139}><CardHead><Chevron />Filters</CardHead></Card>
          <Card $h={641}>
            <CardHead><Chevron />Marks</CardHead>
            <MarkType>
              <Ico w={36} h={36}><circle cx="18" cy="18" r="16.500" /></Ico>
              <span>Automatic</span>
              <MarkTypeArrow><Drop w={24} h={15} /></MarkTypeArrow>
            </MarkType>
            <MarkGrid>
              <MarkButton><FourDots />Color</MarkButton>
              <MarkButton><Ico w={43} h={43}><path d="M9 16C10 8 16 1.500 25 1.500C34 1.500 41.500 8 41.500 17C41.500 26 35 33 27 35" /><circle cx="12.500" cy="30.500" r="11" /><path d="M9 25L15 34" /></Ico>Size</MarkButton>
              <MarkButton><Ico w={43} h={43}><rect x="1.500" y="1.500" width="40" height="40" rx="1" /><path d="M12 16V12H31V16M21.500 12V31M17 31H26" /></Ico>Label</MarkButton>
              <MarkButton><Ico w={43} h={43}><circle cx="21.500" cy="6" r="6" fill={ink} stroke="none" /><path d="M21.500 12V27M6 27V20.500H37V27" /><circle cx="6" cy="36" r="4.500" /><circle cx="21.500" cy="36" r="4.500" /><circle cx="37" cy="36" r="4.500" /></Ico>Detail</MarkButton>
              <MarkButton><Ico w={43} h={43}><path d="M1.500 1.500H41.500V26H20L12 36V26H1.500Z" strokeLinejoin="round" /></Ico>Tooltip</MarkButton>
            </MarkGrid>
            <MarkPill><FourDots /><Pill $w={414} $bg="#5296b4">Siding</Pill></MarkPill>
          </Card>
        </Cards>

        <Stage>
          <Shelf>
            <ShelfLabel>
              <Ico w={36} h={38}><Fill d="M3 0h6v6H3zM3 10h6v27H3zM15 0h6v6h-6zM15 10h6v27h-6zM27 0h6v6h-6zM27 10h6v27h-6z" /></Ico>
              Columns
            </ShelfLabel>
            <Pill $w={450} $bg="#3cb081">Lon</Pill>
          </Shelf>
          <Shelf>
            <ShelfLabel>
              <Ico w={36} h={38}><Fill d="M0 1h6v6H0zM9 1h27v6H9zM0 13h6v6H0zM9 13h27v6H9zM0 25h6v6H0zM9 25h27v6H9z" /></Ico>
              Rows
            </ShelfLabel>
            <Pill $w={450} $bg="#3cb081">Lat</Pill>
          </Shelf>
          <View>
            <ViewTitle>ogden_siding</ViewTitle>
            <MapFrame>
              <MapCanvas />
              <MapControl $top={27} $h={84}>
                <Ico w={78} h={78} c="#808080"><circle cx="42" cy="35" r="14" /><path d="M32 45L22 55" strokeWidth="4" /></Ico>
              </MapControl>
              <MapControl $top={150} $h={310}>
                <Ico w={78} h={304} c="#777">
                  <path d="M24 42H54M39 27V57M24 109H54" strokeWidth="6" />
                  <path d="M17 173L39 154L61 173M22 171V194H56V171M34 194V178H44V194" strokeWidth="3" />
                  <path d="M9 218H69" stroke="#dedede" />
                  <Fill c="#777" d="M30 247L50 262L30 278Z" />
                </Ico>
              </MapControl>
              <Credit><span>© 2023 Mapbox</span><span>© OpenStreetMap</span></Credit>
            </MapFrame>
          </View>
        </Stage>
      </Main>

      <SheetTabs>
        <SheetTab $w={373} $pad={33}><Ico w={25} h={36}><ellipse cx="12.500" cy="8" rx="11" ry="6" /><path d="M1.500 8V27C1.500 37 23.500 37 23.500 27V8" /></Ico>Data Source</SheetTab>
        <SheetTab $w={271} $pad={20} $active>ogden_siding</SheetTab>
        <SheetTab $w={97} $pad={28}><Ico w={46} h={46}><path d="M19 33H1.500V1.500H32V19" /><Fill d="M9 19h3v6H9zM16 9h3v16h-3zM22 13h3v12h-3z" /><Plus x={33} y={33} w={6} /></Ico></SheetTab>
        <SheetTab $w={96} $pad={28}><Ico w={46} h={46}><path d="M17 33H1.500V1.500H32V18H1.500M17 1.500V33" /><Plus x={33} y={33} w={6} /></Ico></SheetTab>
        <SheetTab $w={96} $pad={28}><Ico w={46} h={46}><path d="M17 35L1.500 27V2L17 9L32 2V19M17 9V35" /><Plus x={33} y={33} w={6} /></Ico></SheetTab>
      </SheetTabs>
      <Status><span>900 marks</span><span>1 row by 1 column</span></Status>
      <Wallpaper />

      <ShowMe>
        <ShowMeTab>
          <svg width="43" height="46" viewBox="0 0 43 46">
            <rect width="34" height="9" fill="#84719a" /><rect y="12" width="43" height="9" fill="#86a5cb" />
            <rect y="24" width="16" height="9" fill="#eea67a" /><rect y="36" width="24" height="9" fill="#f3747f" />
          </svg>
          Show Me
        </ShowMeTab>
        <Panel>
          <PanelBody>
            <Gallery>
              {gallery.map((art, i) => (
                <Tile key={i} $picked={i === 3}><svg viewBox={tileBox(i)} preserveAspectRatio="none">{art}</svg></Tile>
              ))}
            </Gallery>
            <Hint $mt={51}>For <b>symbol maps</b> try</Hint>
            <Hint $mt={12}><Tool $ml={0} $w={100}>1 geo</Tool><Globe c="#666" /><Tool $ml={27} $w={222}><HintPill $w={222}>Dimension</HintPill></Tool></Hint>
            <Hint $mt={16} $pl={165}><HintPill $w={239} /></Hint>
          </PanelBody>
          <Scroll $h="1420px" $mt={0} $start={51} $track="#ffffff"><Thumb $h="100%" /></Scroll>
        </Panel>
      </ShowMe>

      <Annotations width="3840" height="1725" viewBox="0 0 3840 1725" fill="none" stroke="#e81c1c" strokeLinecap="round" strokeLinejoin="round">
        {strokes.map(([d, w], i) => <path key={i} d={d} strokeWidth={w} />)}
      </Annotations>
    </Shell>
  );
}
